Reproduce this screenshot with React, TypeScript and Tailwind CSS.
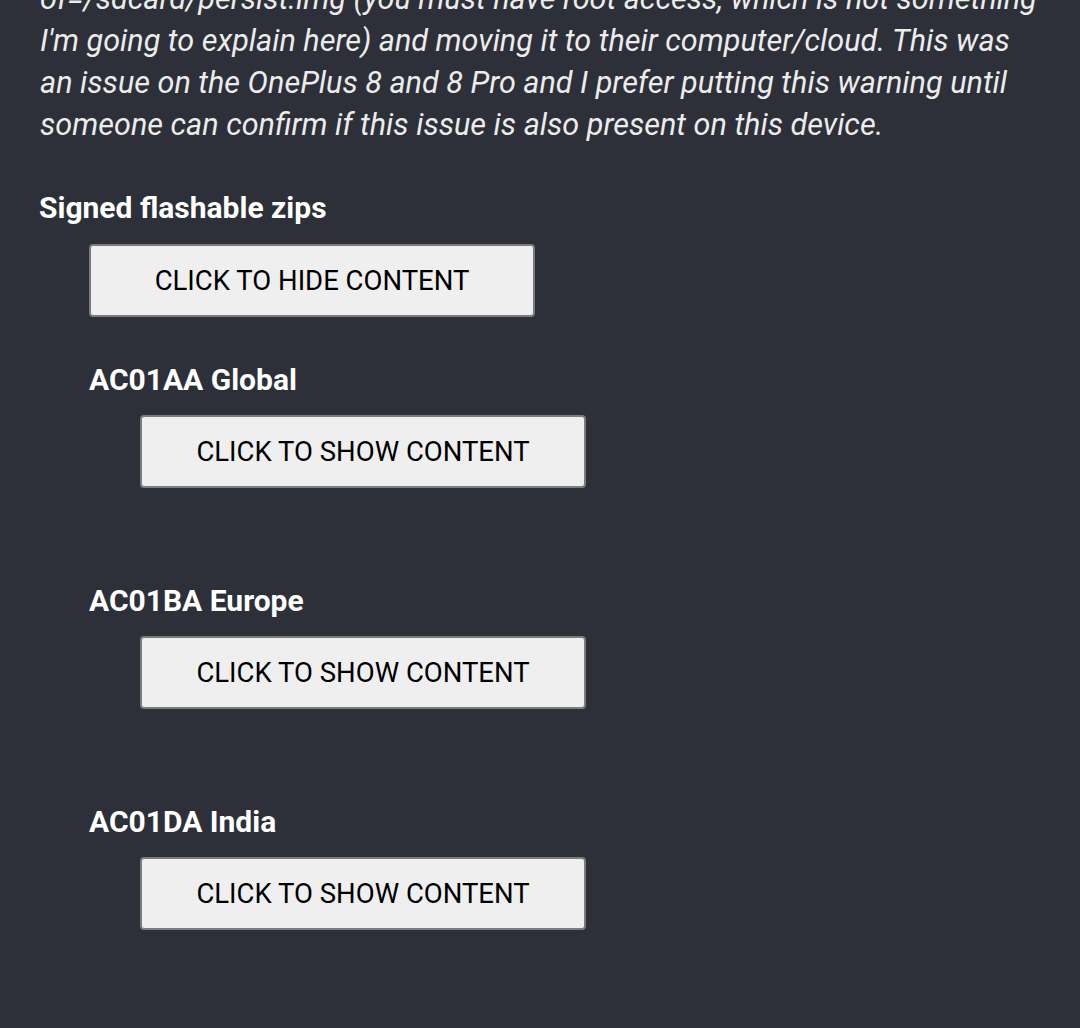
import React from "react";

const font = { fontFamily: "Roboto, 'Noto Sans', sans-serif" };

function SpoilerButton({ label }: { label: string }) {
  return (
    <button
      type="button"
      className="flex h-[73px] w-[446px] items-center justify-center rounded-[4px] border-2 border-[#7c7c7c] bg-[#efefef] text-[27.5px] text-black"
    >
      {label}
    </button>
  );
}

function Variant({ name, first }: { name: string; first?: boolean }) {
  return (
    <div className={first ? "mt-[45px]" : "mt-[95px]"}>
      <h4 className="h-9 text-[30px] font-bold leading-9 text-white">{name}</h4>
      <div className="mt-[17px] pl-[51px]">
        <SpoilerButton label="CLICK TO SHOW CONTENT" />
      </div>
    </div>
  );
}

export default function App() {
  return (
    <div className="h-[1028px] w-[1080px] overflow-hidden bg-[#2d3038]" style={font}>
      <div className="pl-[39px] pr-6">
        <p className="-mt-[22px] whitespace-nowrap pl-px text-[30.6px] italic leading-[42px] text-[#ececec]">
          of=/sdcard/persist.img (you must have root access, which is not something
          <br />
          I'm going to explain here) and moving it to their computer/cloud. This was
          <br />
          an issue on the OnePlus 8 and 8 Pro and I prefer putting this warning until
          <br />
          someone can confirm if this issue is also present on this device.
        </p>

        <h3 className="mt-[44px] h-9 text-[30px] font-bold leading-9 text-white">Signed flashable zips</h3>
        <div className="pl-[50px]">
          <div className="mt-[18px]">
            <SpoilerButton label="CLICK TO HIDE CONTENT" />
          </div>
          <Variant name="AC01AA Global" first />
          <Variant name="AC01BA Europe" />
          <Variant name="AC01DA India" />
        </div>
      </div>
    </div>
  );
}
